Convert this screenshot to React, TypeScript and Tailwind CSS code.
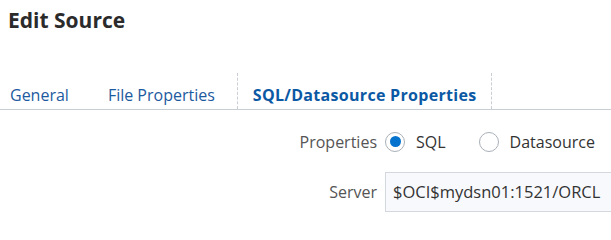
export default function App() {
  const font = { fontFamily: '"Open Sans", "Noto Sans", sans-serif' };
  return (
    <div className="w-[611px] h-[215px] overflow-hidden bg-white text-[#333]" style={font}>
      <h1 className="pl-2 pt-[6px] h-[73px] text-[21px] leading-[29px] font-bold text-[#2b2b2b]">
        Edit Source
      </h1>

      <div className="flex items-end h-[37px] border-b border-[#c9ced4]">
        <div className="pl-[10px] pr-[39px] pb-[2px] text-[16px] text-[#1c5aa0]">General</div>
        <div className="pr-[22px] pb-[2px] text-[16px] text-[#1c5aa0]">File Properties</div>
        <div className="h-[36px] flex items-end px-[15px] pb-[2px] border-x border-dashed border-[#c9ced4] text-[16px] tracking-[0.3px] font-bold text-[#0b59a4]">
          SQL/Datasource Properties
        </div>
      </div>

      <div className="flex items-center h-[31px] mt-[16px]">
        <div className="w-[377px] text-right text-[16px] text-[#555]">Properties</div>
        <label className="flex items-center ml-[8px]">
          <span className="w-[20px] h-[20px] rounded-full border border-[#a9b0b8] flex items-center justify-center">
            <span className="w-[11px] h-[11px] rounded-full bg-[#0572ce]" />
          </span>
          <span className="ml-[11px] text-[16px] text-[#333]">SQL</span>
        </label>
        <label className="flex items-center ml-[33px]">
          <span className="w-[20px] h-[20px] rounded-full border border-[#a9b0b8]" />
          <span className="ml-[11px] text-[16px] text-[#333]">Datasource</span>
        </label>
      </div>

      <div className="flex items-center mt-[15px]">
        <div className="w-[377px] text-right text-[16px] text-[#555]">Server</div>
        <div className="ml-[8px] flex-1 h-[40px] flex items-center pl-[7px] bg-[#f8f9fc] border border-r-0 border-[#d3d8de] text-[16.5px] text-[#333] whitespace-nowrap">
          $OCI$mydsn01:1521/ORCL
        </div>
      </div>
    </div>
  );
}
